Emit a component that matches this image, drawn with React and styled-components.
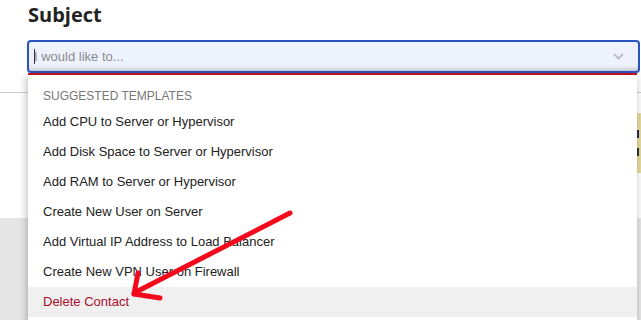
import React from 'react';
import styled, { createGlobalStyle } from 'styled-components';

const GlobalStyle = createGlobalStyle`
    html, body {
        margin: 0;
        padding: 0;
        background: #ffffff;
    }
`;

const Page = styled.div`
    position: relative;
    width: 641px;
    height: 320px;
    overflow: hidden;
    font-family: "Liberation Sans", Arial, sans-serif;
    background: #ffffff;
`;

const Header = styled.div`
    height: 92px;
    padding: 0 1px 0 27px;
    border-bottom: 1px solid #cfcfcf;
`;

const Title = styled.h2`
    margin: 0;
    padding: 0 0 0 1px;
    height: 40px;
    box-sizing: border-box;
    font-family: "Open Sans", sans-serif;
    font-weight: 700;
    font-size: 20px;
    line-height: 30px;
    color: #222;
`;

const Field = styled.div`
    position: relative;
`;

const Input = styled.div`
    display: flex;
    align-items: center;
    height: 33px;
    box-sizing: border-box;
    padding: 0 14px 0 5px;
    border: 2px solid #2b54c2;
    border-radius: 4px;
    background: #eef2fd;
    box-shadow: inset 0 -5px 4px -3px rgba(0, 0, 0, 0.18);
    font-size: 13px;
    color: #8a8a8a;
`;

const Caret = styled.span`
    width: 1px;
    height: 15px;
    margin-right: -1px;
    background: #333;
`;

const Placeholder = styled.span`
    flex: 1;
`;

const Chevron = () => (
    <svg width="11" height="7" viewBox="0 0 11 7">
        <polyline points="1,1 5.5,5.5 10,1" fill="none" stroke="#b5b5b5" strokeWidth="1.6" />
    </svg>
);

const Menu = styled.div`
    position: absolute;
    top: 33px;
    left: 1px;
    right: 3px;
    height: 260px;
    background: #ffffff;
    border-top: 2px solid #c0111f;
    box-shadow: -1px 3px 8px rgba(0, 0, 0, 0.28);
    z-index: 2;
`;

const MenuLabel = styled.div`
    padding: 13px 15px 3px;
    line-height: 16px;
    font-size: 12px;
    color: #777;
    text-transform: uppercase;
`;

const MenuItem = styled.div`
    height: 30px;
    line-height: 30px;
    padding: 0 15px;
    font-size: 13px;
    color: ${p => (p.active ? '#a50f2a' : '#222')};
    background: ${p => (p.active ? '#f0f0f0' : 'transparent')};
`;

const Content = styled.div`
    display: flex;
    justify-content: flex-end;
    height: 125px;
    padding-top: 20px;
    box-sizing: border-box;
`;

const Notice = styled.div`
    width: 4px;
    height: 60px;
    background: #e6dc9e;
    display: flex;
    flex-direction: column;
    justify-content: center;
    gap: 10px;
`;

const NoticeMark = styled.span`
    width: 2px;
    height: 8px;
    background: ${p => p.color};
`;

const Footer = styled.div`
    height: 102px;
    background: #e6e6e6;
`;

const Arrow = styled.svg`
    position: absolute;
    left: 0;
    top: 0;
    pointer-events: none;
    z-index: 3;
`;

const templates = [
    'Add CPU to Server or Hypervisor',
    'Add Disk Space to Server or Hypervisor',
    'Add RAM to Server or Hypervisor',
    'Create New User on Server',
    'Add Virtual IP Address to Load Balancer',
    'Create New VPN User on Firewall',
    'Delete Contact',
];

const App = () => {
    return (
        <Page>
            <GlobalStyle />
            <Header>
                <Title>Subject</Title>
                <Field>
                    <Input>
                        <Caret />
                        <Placeholder>I would like to...</Placeholder>
                        <Chevron />
                    </Input>
                    <Menu>
                        <MenuLabel>Suggested Templates</MenuLabel>
                        {templates.map(t => (
                            <MenuItem key={t} active={t === 'Delete Contact'}>{t}</MenuItem>
                        ))}
                    </Menu>
                </Field>
            </Header>
            <Content>
                <Notice>
                    <NoticeMark color="#2a2a6a" />
                    <NoticeMark color="#333" />
                </Notice>
            </Content>
            <Footer />
            <Arrow width="641" height="320" viewBox="0 0 641 320">
                <g stroke="#f4081c" strokeWidth="5" strokeLinecap="round" fill="none">
                    <line x1="290" y1="213" x2="136" y2="292" />
                    <line x1="134" y1="294" x2="138" y2="273" />
                    <line x1="134" y1="294" x2="160" y2="298" />
                </g>
            </Arrow>
        </Page>
    );
};

export default App;
